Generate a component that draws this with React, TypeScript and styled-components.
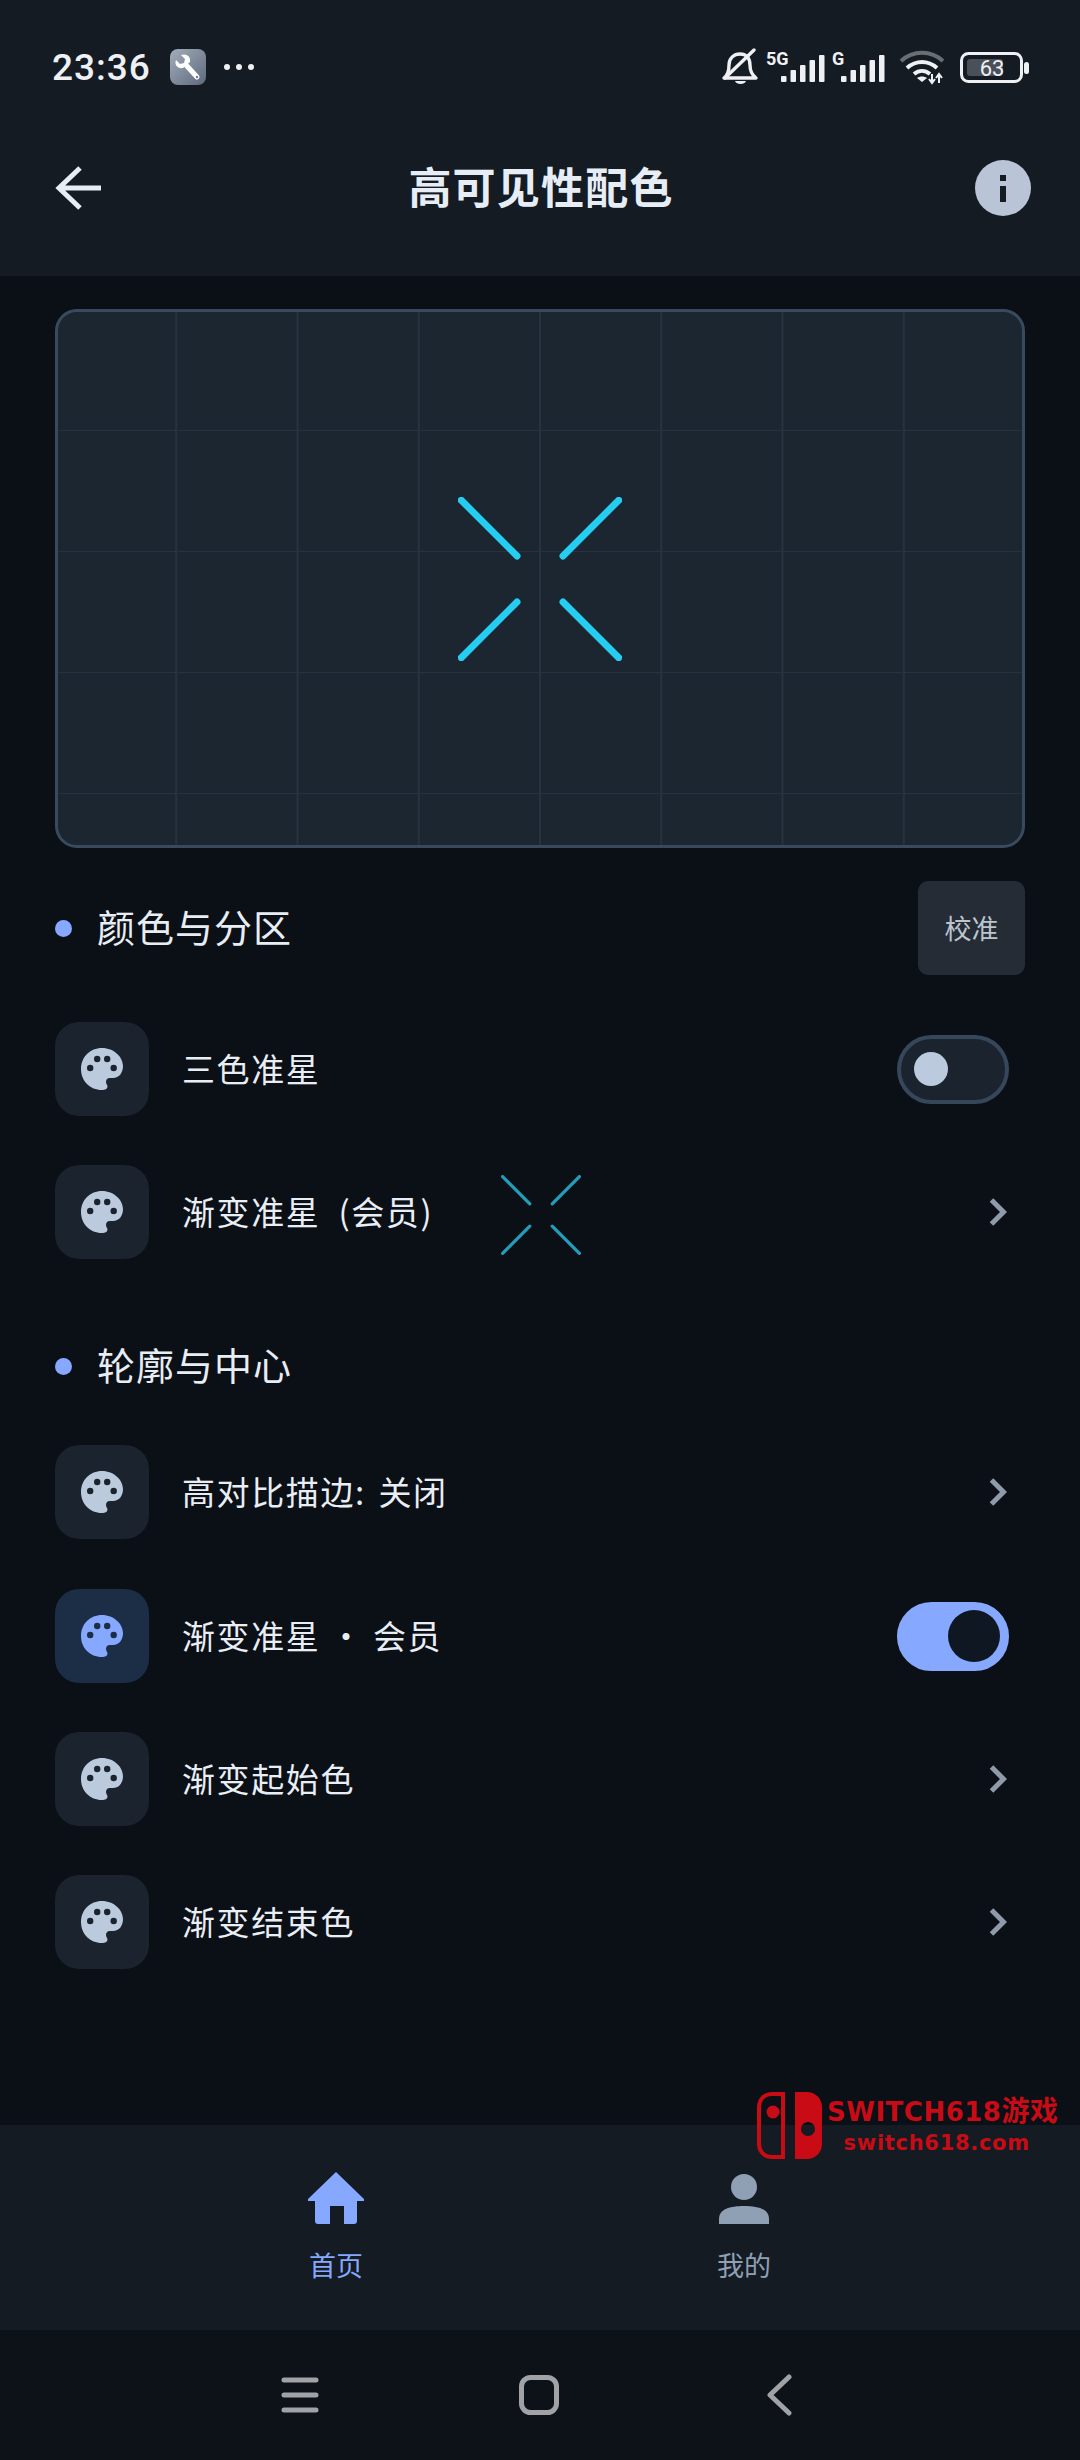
import React from "react"
import styled, { createGlobalStyle } from "styled-components"

const FONT = `"Noto Sans CJK SC", "Noto Sans", sans-serif`

const GlobalStyle = createGlobalStyle`
  html, body {
    margin: 0;
    padding: 0;
    background: #0b0f16;
    font-family: ${FONT};
  }
  * { box-sizing: border-box; }
`

const Screen = styled.div`
  width: 1080px;
  height: 2460px;
  display: flex;
  flex-direction: column;
  background: #0b0f16;
  overflow: hidden;
  position: relative;
`
const TopArea = styled.header`
  height: 276px;
  background: #141b23;
  flex-shrink: 0;
`
const StatusBar = styled.div`
  height: 134px;
  padding: 0 50px 0 52px;
  display: flex;
  align-items: center;
  justify-content: space-between;
  color: #eef0f3;
`
const StatusLeft = styled.div`
  display: flex;
  align-items: center;
`
const Time = styled.span`
  font-family: Roboto, sans-serif;
  font-size: 37px;
  font-weight: 500;
  letter-spacing: 1px;
  width: 118px;
`
const ToolBadge = styled.div`
  width: 36px;
  height: 36px;
  border-radius: 8px;
  background: linear-gradient(135deg, #a3adba, #5d6a7d);
  display: flex;
  align-items: center;
  justify-content: center;
  margin-right: 17px;
`
const StatusRight = styled.div`
  display: flex;
  align-items: center;
`
const TitleBar = styled.div`
  height: 108px;
  padding: 0 49px 0 55px;
  display: flex;
  align-items: center;
  justify-content: space-between;
`
const Title = styled.h1`
  margin: 0 0 0 6px;
  padding-bottom: 6px;
  font-size: 43px;
  font-weight: 700;
  color: #e7edf5;
  letter-spacing: 1.2px;
  line-height: 1;
`
const Content = styled.main`
  flex: 1;
  padding: 33px 55px 0;
`
const Preview = styled.div`
  height: 539px;
  border: 3px solid #3a4a5e;
  border-radius: 22px;
  background-color: #1c2631;
  background-image:
    linear-gradient(to right, #26323f 2px, transparent 2px),
    linear-gradient(to bottom, #26323f 2px, transparent 2px);
  background-size: 121.25px 121px;
  background-origin: border-box;
  background-position: -1px -1px;
  display: flex;
  align-items: center;
  justify-content: center;
`
const SectionHead = styled.div<{ $top: number }>`
  margin-top: ${p => p.$top}px;
  height: 94px;
  display: flex;
  align-items: center;
`
const Dot = styled.span`
  width: 17px;
  height: 17px;
  border-radius: 50%;
  background: #86a8ff;
  margin-right: 25px;
`
const SectionTitle = styled.h2`
  flex: 1;
  margin: 0;
  padding-bottom: 5px;
  font-size: 38px;
  font-weight: 400;
  letter-spacing: 1px;
  color: #e8edf4;
`
const CalibrateButton = styled.button`
  width: 107px;
  height: 94px;
  border: 0;
  padding: 0 0 1px;
  border-radius: 10px;
  background: #252c36;
  color: #bcc4ce;
  font-family: ${FONT};
  font-size: 27px;
`
const Row = styled.div<{ $top: number }>`
  margin-top: ${p => p.$top}px;
  height: 94px;
  display: flex;
  align-items: center;
`
const IconBox = styled.div<{ $active?: boolean }>`
  width: 94px;
  height: 94px;
  border-radius: 24px;
  background: ${p => (p.$active ? "#1c2d46" : "#1a232e")};
  color: ${p => (p.$active ? "#86a8ff" : "#bccadd")};
  display: flex;
  align-items: center;
  justify-content: center;
`
const RowLabel = styled.span`
  margin-left: 33px;
  padding-bottom: 3px;
  font-size: 33px;
  letter-spacing: 1.6px;
  color: #e9eef5;
  white-space: pre;
`
const RowEnd = styled.div`
  margin-left: auto;
  display: flex;
  align-items: center;
`
const MiniCross = styled.div`
  margin: 5px 0 0 68px;
  width: 80px;
  height: 80px;
`
const Switch = styled.div<{ $on?: boolean }>`
  width: 112px;
  height: 69px;
  margin-right: 16px;
  border-radius: 35px;
  border: 4px solid ${p => (p.$on ? "#86a8ff" : "#36475c")};
  background: ${p => (p.$on ? "#86a8ff" : "#1a232e")};
  display: flex;
  align-items: center;
  justify-content: ${p => (p.$on ? "flex-end" : "flex-start")};
  padding: 0 ${p => (p.$on ? 5 : 13)}px;
`
const Knob = styled.span<{ $on?: boolean }>`
  width: ${p => (p.$on ? 52 : 34)}px;
  height: ${p => (p.$on ? 52 : 34)}px;
  border-radius: 50%;
  background: ${p => (p.$on ? "#0f1722" : "#bccadd")};
`
const TabBar = styled.nav`
  height: 205px;
  flex-shrink: 0;
  background: #141b23;
  display: flex;
  padding-top: 47px;
`
const Tab = styled.div<{ $left: number; $active?: boolean }>`
  width: 120px;
  margin-left: ${p => p.$left}px;
  display: flex;
  flex-direction: column;
  align-items: center;
  color: ${p => (p.$active ? "#86a8ff" : "#8f9fb4")};
  font-size: 27px;
`
const TabLabel = styled.span`
  margin-top: 23px;
  line-height: 36px;
`
const NavBar = styled.div`
  height: 130px;
  flex-shrink: 0;
  background: #0d1219;
  display: flex;
  align-items: center;
  padding-left: 281px;
`
const NavSlot = styled.div<{ $w: number }>`
  width: ${p => p.$w}px;
  display: flex;
  align-items: center;
`
const Watermark = styled.div`
  position: absolute;
  left: 757px;
  top: 2092px;
  display: flex;
  color: #c80b14;
`
const WatermarkText = styled.div`
  margin-left: 5px;
  display: flex;
  flex-direction: column;
  align-items: center;
  font-family: "DejaVu Sans", sans-serif;
  font-weight: 700;
  white-space: nowrap;
`
const MarkTop = styled.span`
  font-size: 26px;
  line-height: 30px;
  margin-top: 2px;
  letter-spacing: 0.5px;
`
const MarkCjk = styled.span`
  font-family: ${FONT};
  font-size: 28px;
`
const MarkBottom = styled.span`
  font-size: 21px;
  line-height: 26px;
  margin: 3px 12px 0 0;
  letter-spacing: 0.7px;
`

const Palette = () => (
  <svg width="42" height="42" viewBox="0 0 42 42">
    <path
      fill="currentColor"
      fillRule="evenodd"
      d="M21 0C33 0 42 9 42 18C42 25 38 30 32 30L29 30C26 30 25 32 25 34C25 36 26.5 37 26.5 38.5C26.5 41 24 42 21 42C9 42 0 33 0 21C0 9 9 0 21 0Z
      M6 20a3.2 3.2 0 1 0 6.4 0a3.2 3.2 0 1 0-6.4 0Z
      M13 11a3.2 3.2 0 1 0 6.4 0a3.2 3.2 0 1 0-6.4 0Z
      M23 11a3.2 3.2 0 1 0 6.4 0a3.2 3.2 0 1 0-6.4 0Z
      M29.5 20a3.2 3.2 0 1 0 6.4 0a3.2 3.2 0 1 0-6.4 0Z"
    />
  </svg>
)

const Chevron = () => (
  <svg width="18" height="30" viewBox="0 0 18 30" style={{ marginRight: 18 }}>
    <path d="M2.5 3l12 12-12 12" fill="none" stroke="#8f9bab" strokeWidth="5" />
  </svg>
)

// the four diagonal strokes of the crosshair, on a 0..100 box
const Crosshair = ({ size, color, width }: { size: number; color: string; width: number }) => (
  <svg width={size} height={size} viewBox="0 0 100 100">
    <g stroke={color} strokeWidth={width} strokeLinecap="round">
      <line x1="2" y1="2" x2="36" y2="36" />
      <line x1="98" y1="2" x2="64" y2="36" />
      <line x1="2" y1="98" x2="36" y2="64" />
      <line x1="98" y1="98" x2="64" y2="64" />
    </g>
  </svg>
)

const Signal = ({ label, width, barsAt }: { label: string; width: number; barsAt: number }) => (
  <svg width={width} height="40" viewBox={`0 0 ${width} 40`}>
    <text x="0" y="18" fontFamily="Roboto, sans-serif" fontWeight="700" fontSize="18" fill="#eef0f3">
      {label}
    </text>
    <g fill="#eef0f3">
      {[6, 12, 17, 22, 27].map((h, i) => (
        <rect key={i} x={barsAt + i * 9.5} y={35 - h} width="5.5" height={h} rx="1" />
      ))}
    </g>
  </svg>
)

export default function App() {
  return (
    <Screen>
      <GlobalStyle />
      <TopArea>
        <StatusBar>
          <StatusLeft>
            <Time>23:36</Time>
            <ToolBadge>
              <svg width="28" height="28" viewBox="0 0 28 28">
                <path d="M2 7l4 4 4-1 1-4-4-4c5-2 10 1 9 7L9 15C4 16 0 12 2 7z" fill="#fff" />
                <path d="M12 12l11 12" stroke="#fff" strokeWidth="5" strokeLinecap="round" />
                <circle cx="23" cy="24" r="1.2" fill="#6d7a8c" />
              </svg>
            </ToolBadge>
            <svg width="32" height="8" viewBox="0 0 32 8">
              <g fill="#eef0f3">
                <circle cx="4" cy="4" r="3" />
                <circle cx="16" cy="4" r="3" />
                <circle cx="28" cy="4" r="3" />
              </g>
            </svg>
          </StatusLeft>
          <StatusRight>
            <svg width="38" height="38" viewBox="0 0 38 38">
              <g fill="none" stroke="#eef0f3" strokeWidth="3.4" strokeLinejoin="round" strokeLinecap="round">
                <path d="M3 30c4-3 5-8 5-13 0-7 5-11 11-11 6 0 10 4 10 11 0 5 2 10 6 13z" />
                <path d="M4 30L33 2" stroke="#eef0f3" />
              </g>
              <path d="M14 33h11c-1 4-10 4-11 0z" fill="#eef0f3" />
            </svg>
            <span style={{ width: 7 }} />
            <Signal label="5G" width={60} barsAt={15} />
            <span style={{ width: 6 }} />
            <Signal label="G" width={54} barsAt={9} />
            <svg width="46" height="36" viewBox="0 0 46 36" style={{ marginLeft: 13 }}>
              <g fill="none" strokeWidth="4">
                <path d="M2 12c12-11 30-11 42 0" stroke="#6a6e73" />
                <path d="M8 19c9-8 21-8 30 0M15 25c5-4 11-4 16 0" stroke="#eef0f3" />
              </g>
              <path d="M18 29c3-2 7-2 10 0l-5 4z" fill="#eef0f3" />
              <path d="M33 34v-9M40 34v-9M36 30l-3 4-3-4M37 29l3-4 3 4" fill="none" stroke="#eef0f3" strokeWidth="2" />
            </svg>
            <svg width="70" height="31" viewBox="0 0 70 31" style={{ marginLeft: 15 }}>
              <rect x="1.5" y="1.5" width="60" height="28" rx="7" fill="none" stroke="#eef0f3" strokeWidth="3" />
              <rect x="7" y="7" width="36" height="17" rx="3" fill="#4a4f58" />
              <rect x="64" y="10" width="5" height="12" rx="2.5" fill="#eef0f3" />
              <text x="32" y="24" textAnchor="middle" fontFamily="Roboto, sans-serif" fontSize="22" fill="#eef0f3">
                63
              </text>
            </svg>
          </StatusRight>
        </StatusBar>
        <TitleBar>
          <svg width="46" height="46" viewBox="0 0 46 46">
            <path d="M46 23H5M25 3L4 23l21 20" fill="none" stroke="#e7edf5" strokeWidth="5" />
          </svg>
          <Title>高可见性配色</Title>
          <svg width="56" height="56" viewBox="0 0 56 56">
            <circle cx="28" cy="28" r="28" fill="#b9c5d6" />
            <rect x="25" y="15" width="6" height="6" fill="#141b23" />
            <rect x="25" y="26" width="6" height="16" fill="#141b23" />
          </svg>
        </TitleBar>
      </TopArea>
      <Content>
        <Preview>
          <Crosshair size={164} color="#25cdf0" width={4.2} />
        </Preview>
        <SectionHead $top={33}>
          <Dot />
          <SectionTitle>颜色与分区</SectionTitle>
          <CalibrateButton>校准</CalibrateButton>
        </SectionHead>
        <Row $top={47}>
          <IconBox>
            <Palette />
          </IconBox>
          <RowLabel>三色准星</RowLabel>
          <RowEnd>
            <Switch>
              <Knob />
            </Switch>
          </RowEnd>
        </Row>
        <Row $top={49}>
          <IconBox>
            <Palette />
          </IconBox>
          <RowLabel>渐变准星{"\u2002"}(会员)</RowLabel>
          <MiniCross>
            <Crosshair size={80} color="#1f9fbb" width={4} />
          </MiniCross>
          <RowEnd>
            <Chevron />
          </RowEnd>
        </Row>
        <SectionHead $top={60}>
          <Dot />
          <SectionTitle>轮廓与中心</SectionTitle>
        </SectionHead>
        <Row $top={32}>
          <IconBox>
            <Palette />
          </IconBox>
          <RowLabel>高对比描边:{"\u2004"}关闭</RowLabel>
          <RowEnd>
            <Chevron />
          </RowEnd>
        </Row>
        <Row $top={50}>
          <IconBox $active>
            <Palette />
          </IconBox>
          <RowLabel>渐变准星 · 会员</RowLabel>
          <RowEnd>
            <Switch $on>
              <Knob $on />
            </Switch>
          </RowEnd>
        </Row>
        <Row $top={49}>
          <IconBox>
            <Palette />
          </IconBox>
          <RowLabel>渐变起始色</RowLabel>
          <RowEnd>
            <Chevron />
          </RowEnd>
        </Row>
        <Row $top={49}>
          <IconBox>
            <Palette />
          </IconBox>
          <RowLabel>渐变结束色</RowLabel>
          <RowEnd>
            <Chevron />
          </RowEnd>
        </Row>
      </Content>
      <TabBar>
        <Tab $left={276} $active>
          <svg width="56" height="52" viewBox="0 0 56 52">
            <path
              fill="currentColor"
              d="M28 0L56 27v2H49v20a3 3 0 0 1-3 3H36V34H22v18H10a3 3 0 0 1-3-3V29H0v-2z"
            />
          </svg>
          <TabLabel>首页</TabLabel>
        </Tab>
        <Tab $left={288}>
          <svg width="50" height="52" viewBox="0 0 50 52">
            <circle cx="25" cy="15" r="13" fill="currentColor" />
            <path fill="currentColor" d="M0 52v-5c0-10 11-13 25-13s25 3 25 13v5z" />
          </svg>
          <TabLabel>我的</TabLabel>
        </Tab>
      </TabBar>
      <NavBar>
        <NavSlot $w={238}>
          <svg width="38" height="36" viewBox="0 0 38 36">
            <g fill="none" stroke="#a0a2a5" strokeWidth="5" strokeLinecap="round">
              <path d="M3 3h32M3 18h32M3 33h32" />
            </g>
          </svg>
        </NavSlot>
        <NavSlot $w={247}>
          <svg width="40" height="40" viewBox="0 0 40 40">
            <rect x="2.5" y="2.5" width="35" height="35" rx="9" fill="none" stroke="#a0a2a5" strokeWidth="5" />
          </svg>
        </NavSlot>
        <NavSlot $w={30}>
          <svg width="26" height="42" viewBox="0 0 26 42">
            <path d="M23 3L4 21l19 18" fill="none" stroke="#a0a2a5" strokeWidth="5" strokeLinecap="round" strokeLinejoin="round" />
          </svg>
        </NavSlot>
      </NavBar>
      <Watermark>
        <svg width="65" height="67" viewBox="0 0 65 67">
          <path
            d="M26 2H15C7 2 2 8 2 15v37c0 7 5 13 13 13h11z"
            fill="none"
            stroke="currentColor"
            strokeWidth="4"
          />
          <circle cx="16" cy="20" r="6.5" fill="currentColor" />
          <path
            fillRule="evenodd"
            fill="currentColor"
            d="M38 0h12c9 0 15 7 15 15v37c0 8-6 15-15 15H38zM44 37a7 7 0 1 0 14 0a7 7 0 1 0-14 0z"
          />
        </svg>
        <WatermarkText>
          <MarkTop>
            SWITCH618<MarkCjk>游戏</MarkCjk>
          </MarkTop>
          <MarkBottom>switch618.com</MarkBottom>
        </WatermarkText>
      </Watermark>
    </Screen>
  )
}
